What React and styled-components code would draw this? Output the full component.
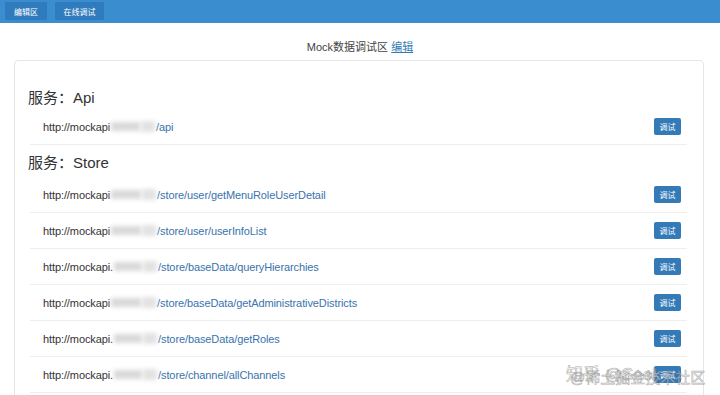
import React from "react";
import styled, { createGlobalStyle } from "styled-components";

const Global = createGlobalStyle`
  html, body { margin: 0; padding: 0; background: #fff; }
  body { font-family: "Liberation Sans", Arial, "Noto Sans CJK SC", sans-serif; color: #333; overflow: hidden; }
`;

const Page = styled.div`
  position: relative;
  width: 720px;
  height: 395px;
  overflow: hidden;
`;

const TopBar = styled.div`
  height: 23px;
  background: #3a8ecf;
  display: flex;
  align-items: flex-start;
  gap: 8px;
  padding: 2px 0 0 5px;
  box-sizing: border-box;
`;

const TabButton = styled.button`
  height: 18px;
  width: ${(p) => p.$w}px;
  border: none;
  border-radius: 1px;
  background: #2f7bbd;
  color: #fff;
  font-family: "Noto Sans CJK SC", sans-serif;
  font-size: 8px;
  padding: 0;
  display: flex;
  align-items: center;
  justify-content: center;
`;

const Title = styled.div`
  margin-top: 17px;
  height: 14px;
  line-height: 14px;
  text-align: center;
  font-size: 11px;
  color: #444;
  padding-left: 0;
  font-family: "Liberation Sans", "Noto Sans CJK SC", sans-serif;
`;

const Link = styled.a`
  color: #337ab7;
  text-decoration: underline;
  cursor: pointer;
`;

const Panel = styled.div`
  margin: 6px 16px 0 14px;
  border: 1px solid #e6e6e6;
  border-radius: 4px;
  padding: 0 16px 0 13px;
  height: 400px;
  box-sizing: border-box;
`;

const SectionTitle = styled.div`
  font-size: 15px;
  color: #333;
  font-family: "Liberation Sans", "Noto Sans CJK SC", sans-serif;
  height: 20px;
  line-height: 20px;
  margin-top: ${(p) => p.$mt}px;
  margin-bottom: ${(p) => p.$mb}px;
`;

const Row = styled.div`
  height: 35px;
  border-bottom: 1px solid #eee;
  display: flex;
  align-items: center;
  justify-content: space-between;
  padding: 0 6px 0 13px;
  margin-left: 2px;
`;

const Url = styled.div`
  font-size: 11px;
  display: flex;
  align-items: center;
  color: #333;
  letter-spacing: -0.1px;
`;

const Path = styled.span`
  color: #3a73ad;
`;

const Blur = styled.span`
  display: inline-block;
  width: ${(p) => p.$w}px;
  height: 13px;
  position: relative;
  &::before {
    content: "";
    position: absolute;
    left: 1px;
    right: 16px;
    top: 2px;
    bottom: 2px;
    background: #d9d9d9;
    filter: blur(2px);
  }
  &::after {
    content: "";
    position: absolute;
    right: 1px;
    width: 14px;
    top: 1px;
    bottom: 1px;
    background: #e2e2e2;
    filter: blur(2px);
  }
`;

const DebugButton = styled.button`
  width: 27px;
  height: 17px;
  border: none;
  border-radius: 2px;
  background: #337ab7;
  color: #fff;
  font-family: "Noto Sans CJK SC", sans-serif;
  font-size: 8px;
  padding: 0;
`;

const Watermark = styled.div`
  position: absolute;
  left: ${(p) => p.$x}px;
  top: ${(p) => p.$y}px;
  font-size: ${(p) => p.$size}px;
  color: rgba(255, 255, 255, 0.5);
  -webkit-text-stroke: 0.6px rgba(90, 90, 90, 0.5);
  font-family: "Liberation Sans", "Noto Sans CJK SC", sans-serif;
  white-space: nowrap;
  pointer-events: none;
`;

const apiRows = [{ host: "http://mockapi", w: 46, path: "/api" }];
const storeRows = [
  { host: "http://mockapi", w: 47, path: "/store/user/getMenuRoleUserDetail" },
  { host: "http://mockapi", w: 47, path: "/store/user/userInfoList" },
  { host: "http://mockapi.", w: 45, path: "/store/baseData/queryHierarchies" },
  { host: "http://mockapi", w: 47, path: "/store/baseData/getAdministrativeDistricts" },
  { host: "http://mockapi.", w: 45, path: "/store/baseData/getRoles" },
  { host: "http://mockapi.", w: 45, path: "/store/channel/allChannels" },
];

function UrlRow({ r }) {
  return (
    <Row>
      <Url>
        {r.host}
        <Blur $w={r.w} />
        <Path>{r.path}</Path>
      </Url>
      <DebugButton>调试</DebugButton>
    </Row>
  );
}

export default function App() {
  return (
    <Page>
      <Global />
      <TopBar>
        <TabButton $w={42}>编辑区</TabButton>
        <TabButton $w={49}>在线调试</TabButton>
      </TopBar>
      <Title>
        Mock数据调试区 <Link>编辑</Link>
      </Title>
      <Panel>
        <SectionTitle $mt={27} $mb={1}>服务：Api</SectionTitle>
        {apiRows.map((r, i) => (
          <UrlRow key={i} r={r} />
        ))}
        <SectionTitle $mt={8} $mb={4}>服务：Store</SectionTitle>
        {storeRows.map((r, i) => (
          <UrlRow key={i} r={r} />
        ))}
      </Panel>
      <Watermark $x={566} $y={360} $size={17}>知乎 @Seek</Watermark>
      <Watermark $x={570} $y={366} $size={15}>@稀土掘金技术社区</Watermark>
    </Page>
  );
}
